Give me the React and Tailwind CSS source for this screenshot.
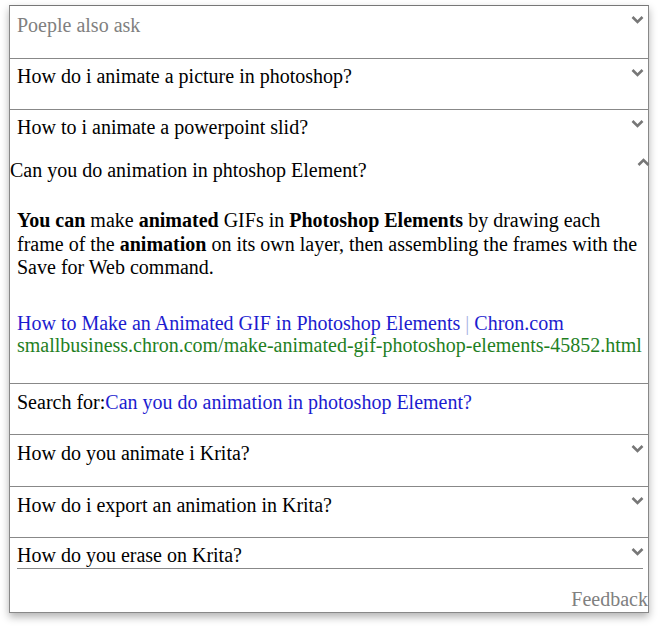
import React from 'react'

const Chevron = ({ up = false }) => (
  <svg width="13" height="8" viewBox="0 0 13 8" className="block">
    <polyline
      points={up ? '1.5,7 6.5,2 11.5,7' : '1.5,1 6.5,6 11.5,1'}
      fill="none"
      stroke="#777"
      strokeWidth="2.6"
    />
  </svg>
)

const Row = ({ children, muted = false, border = true, h = 'h-[51px]', pt = 'pt-[6px]' }) => (
  <div className={`relative ${h} ${pt} pl-[7px] ${border ? 'border-b border-[#888]' : ''}`}>
    <span className={muted ? 'text-[#808080]' : 'text-black'}>{children}</span>
    <div className="absolute right-[4px] top-[10px]">
      <Chevron />
    </div>
  </div>
)

export default function App() {
  return (
    <div className="bg-white min-h-[630px] pt-[5px] pl-[9px] font-['Liberation_Serif','Times_New_Roman',serif]">
      <div className="w-[640px] border border-[#888] border-t-[#777] bg-white text-[20px] leading-[23px] shadow-[0_4px_8px_rgba(0,0,0,0.3)]">
        <Row muted h="h-[53px]" pt="pt-[8px]">Poeple also ask</Row>
        <Row>How do i animate a picture in photoshop?</Row>
        <Row border={false} h="h-[49px]">How to i animate a powerpoint slid?</Row>

        {/* expanded question */}
        <div className="border-b border-[#888] pb-[27px]">
          <div className="relative">
            Can you do animation in phtoshop Element?
            <div className="absolute right-[-2px] top-[-1px]">
              <Chevron up />
            </div>
          </div>
          <p className="mt-[27px] pl-[7px] pr-[7px] leading-[23.5px]">
            <b>You can</b> make <b>animated</b> GIFs in <b>Photoshop Elements</b> by drawing each frame of the{' '}
            <b>animation</b> on its own layer, then assembling the frames with the Save for Web command.
          </p>
          <div className="mt-[32px] pl-[7px] leading-[22px]">
            <div className="text-[#1c1ccf]">
              How to Make an Animated GIF in Photoshop Elements <span className="text-[#a8b4e4]">|</span> Chron.com
            </div>
            <div className="text-[#1f7f1f]">smallbusiness.chron.com/make-animated-gif-photoshop-elements-45852.html</div>
          </div>
        </div>

        <div className="h-[51px] pt-[7px] pl-[7px] border-b border-[#888]">
          Search for:<span className="text-[#1c1ccf]">Can you do animation in photoshop Element?</span>
        </div>

        <Row h="h-[52px]" pt="pt-[7px]">How do you animate i Krita?</Row>
        <Row pt="pt-[7px]">How do i export an animation in Krita?</Row>

        <div className="relative pt-[6px] pl-[7px] pr-[5px]">
          <div className="border-b border-[#888] pb-[1px]">How do you erase on Krita?</div>
          <div className="absolute right-[4px] top-[10px]">
            <Chevron />
          </div>
        </div>
        <div className="mt-[19px] text-right text-[#808080] pb-[1px]">Feedback</div>
      </div>
    </div>
  )
}
